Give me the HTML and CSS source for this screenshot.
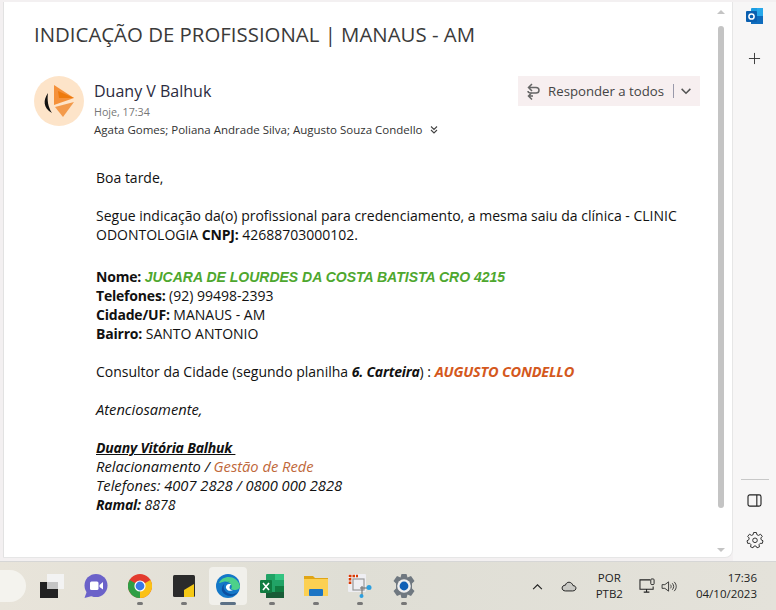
FILE: index.html
```html
<!DOCTYPE HTML>
<html>
<head>
	<meta charset="utf-8"/>
	<title>INDICAÇÃO DE PROFISSIONAL | MANAUS - AM</title>
	<link rel="stylesheet" href="styles.css">
</head>
<body>
	<div class="window">
		<div class="mailpane">
			<div class="mail">
				<h1 class="subject">INDICAÇÃO DE PROFISSIONAL | MANAUS - AM</h1>
				<div class="sender">
					<svg class="avatar" viewBox="0 0 50 50">
						<circle cx="25" cy="25" r="25" fill="#fde4c9"/>
						<path d="M14 17 C9 24 9 32 18 37 C14 31 13 24 14 17Z" fill="#111"/>
						<path d="M20 9 L40 22 L20 29Z" fill="#f5913a"/>
						<path d="M24 15 L40 22 L25 22Z" fill="#ee7a0c"/>
						<path d="M21 31 L40 26 L29 41Z" fill="#f39a4b"/>
					</svg>
					<div class="senderinfo">
						<div class="sendername">Duany V Balhuk</div>
						<div class="senddate">Hoje, 17:34</div>
						<div class="recipients">
							Agata Gomes; Poliana Andrade Silva; Augusto Souza Condello
							<svg class="more" viewBox="0 0 10 10"><path d="M2 1.500 L5 4.500 L8 1.500 M2 5 L5 8 L8 5" fill="none" stroke="#444" stroke-width="1.100"/></svg>
						</div>
					</div>
					<div class="replybtn">
						<svg class="replyicon" viewBox="0 0 15 17"><path d="M6 1 L2.500 4.500 L6 8 M3 4.500 H10 C14 4.500 14 10 10 10 H5 M6 9.500 L2.500 13 L6 16.500 M3 13 H7 M5 10 C3 10 2 9 2 8" fill="none" stroke="#666" stroke-width="1.500"/></svg>
						<span>Responder a todos</span>
						<span class="replysep"></span>
						<svg class="replychev" viewBox="0 0 12 8"><path d="M1 1 L6 6 L11 1" fill="none" stroke="#555" stroke-width="1.700"/></svg>
					</div>
				</div>
				<div class="body">
					<p>Boa tarde,</p>
					<p class="gap">Segue indicação da(o) profissional para credenciamento, a mesma saiu da clínica - CLINIC<br>ODONTOLOGIA <b>CNPJ:</b> 42688703000102.</p>
					<p class="gapbig"><b>Nome:</b> <b class="nomepro">JUCARA DE LOURDES DA COSTA BATISTA CRO 4215</b><br>
					<b>Telefones:</b> (92) 99498-2393<br>
					<b>Cidade/UF:</b> MANAUS - AM<br>
					<b>Bairro:</b> SANTO ANTONIO</p>
					<p class="gap">Consultor da Cidade (segundo planilha <b><i>6. Carteira</i></b>) : <b class="consultor">AUGUSTO CONDELLO</b></p>
					<p class="gap sign">Atenciosamente,</p>
					<p class="gap sign"><b class="signame">Duany Vitória Balhuk&nbsp;</b><br>
					Relacionamento / <span class="rede">Gestão de Rede</span><br>
					Telefones: 4007 2828 / 0800 000 2828<br>
					<b class="signbold">Ramal:</b> <span class="signnum">8878</span></p>
				</div>
			</div>
			<div class="scrollbar">
				<span class="arrowup"></span>
				<div class="thumb"></div>
				<span class="arrowdown"></span>
			</div>
		</div>
		<div class="rail">
			<svg class="outlook" viewBox="0 0 18 18">
				<rect x="5" y="1" width="12" height="16" rx="1" fill="#1b9de2"/>
				<rect x="11" y="1" width="6" height="8" fill="#28a8ea"/>
				<rect x="5" y="9" width="12" height="8" fill="#0f6cbd"/>
				<rect x="0" y="4" width="11" height="11" rx="1" fill="#0a5fb0"/>
				<circle cx="5.500" cy="9.500" r="2.600" fill="none" stroke="#fff" stroke-width="1.500"/>
			</svg>
			<svg class="plus" viewBox="0 0 14 14"><path d="M7 1 V13 M1 7 H13" stroke="#333" stroke-width="1"/></svg>
			<div class="railspacer"></div>
			<div class="railline"></div>
			<svg class="panelicon" viewBox="0 0 16 14"><rect x="1" y="1" width="14" height="12" rx="2" fill="none" stroke="#222" stroke-width="1.200"/><path d="M10.500 1 V13" stroke="#222" stroke-width="1.200"/></svg>
			<svg class="gear" viewBox="0 0 18 18"><path d="M7.600 1.500 H10.400 L10.900 3.700 L12.600 4.400 L14.500 3.200 L16.300 5.400 L14.800 7 L15.200 8.800 L17 9.800 L16.300 12.400 L14.200 12.300 L13 13.700 L13.500 15.800 L11 16.800 L9.900 15 H8.100 L7 16.800 L4.500 15.800 L5 13.700 L3.800 12.300 L1.700 12.400 L1 9.800 L2.800 8.800 L3.200 7 L1.700 5.400 L3.500 3.200 L5.400 4.400 L7.100 3.700 Z" fill="none" stroke="#333" stroke-width="1" stroke-linejoin="round"/><circle cx="9" cy="9.300" r="2.300" fill="none" stroke="#333" stroke-width="1"/></svg>
		</div>
	</div>
	<div class="taskbar">
		<div class="search"></div>
		<div class="tb"><svg viewBox="0 0 24 24"><rect x="7" y="0" width="17" height="15" fill="#f3f3f3"/><rect x="0" y="8" width="18" height="16" fill="#222"/><rect x="7" y="8" width="11" height="7" fill="#c4c4c4"/></svg></div>
		<div class="tb"><svg viewBox="0 0 24 24"><circle cx="12" cy="11.500" r="11.500" fill="#6b62c9"/><path d="M0.500 24 L3 17 L8 22Z" fill="#6b62c9"/><rect x="6" y="7.500" width="8.500" height="8.500" rx="1.500" fill="#fff"/><path d="M15.500 11 L19 8 V15.500 L15.500 13Z" fill="#fff"/></svg></div>
		<div class="tb on"><svg viewBox="0 0 24 24"><circle cx="12" cy="12" r="12" fill="#e33b2e"/><path d="M12 12 L22.400 6 A12 12 0 0 1 12 24Z" fill="#fbc116"/><path d="M12 12 L12 24 A12 12 0 0 1 1.600 6Z" fill="#2f9e44"/><circle cx="12" cy="12" r="5.600" fill="#fff"/><circle cx="12" cy="12" r="4.400" fill="#3b78e7"/></svg></div>
		<div class="tb on"><svg viewBox="0 0 24 24"><rect x="1" y="1" width="22" height="22" rx="1.500" fill="#2b2b2b"/><path d="M12 23 V16 L22 10 V23Z" fill="#f6c915"/></svg></div>
		<div class="tb active"><svg viewBox="0 0 24 24"><circle cx="12" cy="12" r="12" fill="#1478c8"/><path d="M3 9 C6 1 21 0 24 12 C24 16 18 17 15 15 C18 11 12 6 7 8 C5 8.500 4 9 3 9Z" fill="#4dd08a"/><path d="M14 8 C9 7 7 11 8 15 C10 20 17 22 22 18 C18 24 9 23 6 17 C5 13 8 7 14 8Z" fill="#0b4fa0"/><path d="M15 10 C12 9.500 9.500 11 10 14 C11 17 15 17.500 17 16 C14 16 12 14 15 10Z" fill="#fff"/></svg></div>
		<div class="tb on"><svg viewBox="0 0 24 24"><rect x="6" y="0" width="18" height="24" rx="1" fill="#21a366"/><rect x="15" y="0" width="9" height="6" fill="#33c481"/><rect x="15" y="12" width="9" height="6" fill="#107c41"/><rect x="6" y="18" width="18" height="6" fill="#185c37"/><rect x="0" y="6" width="12" height="13" rx="1" fill="#107c41"/><path d="M3 9 L9 16 M9 9 L3 16" stroke="#fff" stroke-width="1.600"/></svg></div>
		<div class="tb on"><svg viewBox="0 0 24 24"><path d="M0 2 H9 L11 4 H24 V22 H0Z" fill="#e0a516"/><rect x="0" y="5" width="24" height="17" fill="#fcd052"/><rect x="5" y="15" width="14" height="7" rx="1" fill="#1b74c4"/></svg></div>
		<div class="tb on"><svg viewBox="0 0 24 24"><rect x="0" y="0" width="18" height="18" rx="1" fill="#eeeef2"/><path d="M2 10 V2 H10" fill="none" stroke="#d83b01" stroke-width="2.600" stroke-dasharray="2.500 1"/><rect x="5" y="5" width="11" height="11" fill="none" stroke="#999" stroke-width="1.200"/><path d="M12 14 L20 14 M14 12 L14 22" stroke="#666" stroke-width="1"/><circle cx="21" cy="13.500" r="2.500" fill="#2c9fe0"/><circle cx="13.500" cy="22" r="2" fill="#2c9fe0"/></svg></div>
		<div class="tb on"><svg viewBox="0 0 24 24"><path d="M9.500 0 H14.500 L15.500 3.500 L19 2 L22.500 7 L20 9.500 V14.500 L22.500 17 L19 22 L15.500 20.500 L14.500 24 H9.500 L8.500 20.500 L5 22 L1.500 17 L4 14.500 V9.500 L1.500 7 L5 2 L8.500 3.500Z" fill="#6f7880"/><circle cx="12" cy="12" r="6.800" fill="#eee"/><circle cx="12" cy="12" r="4.400" fill="#0f5fb5"/></svg></div>
		<div class="tray">
			<svg class="traychev" viewBox="0 0 12 8"><path d="M1 7 L6 2 L11 7" fill="none" stroke="#222" stroke-width="1.300"/></svg>
			<svg class="traycloud" viewBox="0 0 18 12"><path d="M5 11 H13 C18 11 18 5 13.500 5 C12 0 6 0 5 4.500 C0 4.500 0 11 5 11Z" fill="#c9c9c4" stroke="#222" stroke-width="1.100"/></svg>
			<div class="lang">POR<br>PTB2</div>
			<svg class="traynet" viewBox="0 0 18 17"><path d="M12 2 H1 V12 H15 V9 M5 15 H11 M8 12 V15" fill="none" stroke="#222" stroke-width="1.100"/><rect x="12.500" y="1" width="3.500" height="6" rx="1" fill="none" stroke="#222"/></svg>
			<svg class="trayvol" viewBox="0 0 18 14"><path d="M1 5 H4 L8 2 V12 L4 9 H1Z M10 5 C11 6 11 8 10 9 M12 3.500 C14 6 14 8 12 10.500 M14 2 C17 5 17 9 14 12" fill="none" stroke="#222" stroke-width="0.900"/></svg>
			<div class="clock">17:36<br>04/10/2023</div>
		</div>
	</div>
</body>
</html>
```
FILE: styles.css
```css
html, body {
	height: 100%;
}
body {
	margin: 0;
	overflow: hidden;
	display: flex;
	flex-direction: column;
	background-color: #f7f6f6;
	font-family: "Open Sans", "Noto Sans", sans-serif;
	color: #111;
}
svg {
	display: block;
	flex: none;
}
.window {
	flex: 1;
	min-height: 0;
	display: flex;
	padding-top: 2px;
	padding-left: 3px;
	background-color: #f3f0f1;
	border-bottom: 1px solid #d6d6d6;
}
.mailpane {
	flex: 1;
	display: flex;
	background-color: #fff;
	border-left: 1px solid #e2e2e2;
	border-right: 1px solid #e6e6e6;
	border-bottom: 1px solid #e6e6e6;
	border-bottom-right-radius: 8px;
	margin-bottom: 3px;
}
.mail {
	flex: 1;
	padding: 17px 0 0 30px;
}
.subject {
	margin: 0;
	font-size: 20.400px;
	font-weight: 400;
	line-height: 30px;
	color: #3a3a3a;
}
.sender {
	display: flex;
	margin-top: 27px;
	padding-right: 13px;
}
.avatar {
	width: 50px;
	height: 50px;
}
.senderinfo {
	flex: 1;
	margin-left: 10px;
	padding-top: 4px;
}
.sendername {
	font-size: 16px;
	line-height: 22px;
	color: #2b2b40;
}
.senddate {
	font-size: 10.700px;
	line-height: 20px;
	color: #777;
}
.recipients {
	display: flex;
	align-items: center;
	gap: 6px;
	margin-top: -1px;
	font-size: 11.500px;
	line-height: 18px;
	color: #333;
}
.more {
	width: 10px;
	height: 10px;
}
.replybtn {
	display: flex;
	align-items: center;
	height: 30px;
	padding: 0 8px;
	background-color: #f7eff0;
	font-size: 13.200px;
	color: #444;
}
.replyicon {
	width: 15px;
	height: 17px;
	margin-right: 7px;
}
.replysep {
	width: 1px;
	height: 14px;
	background-color: #99a;
	margin: 0 6px 0 9px;
}
.replychev {
	width: 12px;
	height: 7px;
}
.body {
	margin: 29px 0 0 62px;
	font-size: 14px;
	line-height: 19px;
}
.body p {
	margin: 0;
}
.body .gap {
	margin-top: 19px;
}
.body .gapbig {
	margin-top: 23px;
}
.body b {
	letter-spacing: -0.200px;
}
.nomepro {
	font-family: "Liberation Sans", sans-serif;
	font-style: italic;
	line-height: 1;
	color: #4ea72e;
}
.body .nomepro {
	letter-spacing: 0;
}
.consultor {
	font-size: 14.500px;
	font-style: italic;
	line-height: 1;
	color: #d4581c;
}
.sign {
	font-style: italic;
	font-size: 14.700px;
}
.signame, .signbold, .signnum {
	font-size: 14px;
	line-height: 1;
}
.signame {
	text-decoration: underline;
}
.rede {
	color: #c0683a;
}
.scrollbar {
	width: 16px;
	display: flex;
	flex-direction: column;
	align-items: center;
	padding: 8px 0 5px;
	margin-right: 3px;
}
.arrowup {
	border-left: 4px solid transparent;
	border-right: 4px solid transparent;
	border-bottom: 4px solid #c4c4c4;
}
.arrowdown {
	border-left: 4px solid transparent;
	border-right: 4px solid transparent;
	border-top: 4px solid #c4c4c4;
}
.thumb {
	flex: 1;
	width: 6px;
	margin: 12px 0 40px;
	border-radius: 3px;
	background-color: #c4c4c4;
}
.rail {
	width: 43px;
	display: flex;
	flex-direction: column;
	align-items: center;
	background-color: #f7f6f6;
	padding: 5px 0 12px;
}
.outlook {
	width: 18px;
	height: 18px;
}
.plus {
	width: 13px;
	height: 13px;
	margin-top: 27px;
}
.railspacer {
	flex: 1;
}
.railline {
	width: 28px;
	height: 1px;
	background-color: #c8c8c8;
}
.panelicon {
	width: 15px;
	height: 13px;
	margin-top: 14px;
}
.gear {
	width: 18px;
	height: 18px;
	margin-top: 24px;
}
.taskbar {
	height: 48px;
	display: flex;
	align-items: center;
	background: linear-gradient(90deg, #e8e4da, #dfded5 45%, #e4e2da);
}
.search {
	width: 27px;
	height: 32px;
	margin-left: -1px;
	border-radius: 0 16px 16px 0;
	background-color: #f4f3ee;
	margin-right: 7px;
}
.tb {
	width: 38px;
	height: 38px;
	margin-right: 6px;
	display: flex;
	align-items: center;
	justify-content: center;
	position: relative;
	border-radius: 4px;
}
.tb svg {
	width: 24px;
	height: 24px;
}
.tb.active {
	background-color: #f1f0eb;
}
.tb.on::after, .tb.active::after {
	content: "";
	position: absolute;
	bottom: 0;
	left: 16px;
	width: 6px;
	height: 3px;
	border-radius: 2px;
	background-color: #777;
}
.tb.active::after {
	left: 11px;
	width: 16px;
	background-color: #5c7186;
}
.tray {
	flex: 1;
	display: flex;
	align-items: center;
	justify-content: flex-end;
	padding-right: 19px;
	font-size: 11.500px;
	color: #222;
}
.traychev {
	width: 11px;
	height: 7px;
	margin-right: 18px;
}
.traycloud {
	width: 16px;
	height: 11px;
	margin-right: 19px;
}
.lang {
	text-align: center;
	line-height: 16px;
	margin-right: 16px;
}
.traynet {
	width: 17px;
	height: 16px;
	margin-right: 5px;
}
.trayvol {
	width: 17px;
	height: 13px;
	margin-right: 18px;
}
.clock {
	text-align: right;
	line-height: 16px;
}
```
